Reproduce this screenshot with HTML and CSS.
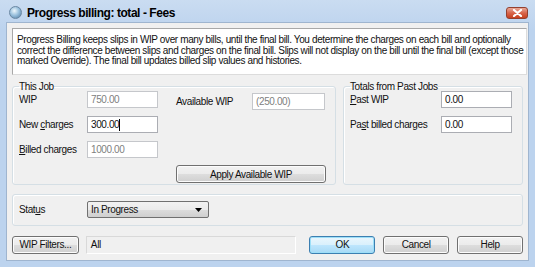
FILE: index.html
```html
<!DOCTYPE html>
<html>
<head>
<meta charset="utf-8">
<link rel="stylesheet" href="styles.css">
</head>
<body>
<div class="window">
  <div class="titlebar">
    <span class="appicon"></span>
    <span class="title">Progress billing: total - Fees</span>
    <span class="close"><svg width="11" height="8" viewBox="0 0 11 8"><path d="M2 1 L9 7 M9 1 L2 7" stroke="#fff" stroke-width="2.2" stroke-linecap="round"/></svg></span>
  </div>
  <div class="client">
    <div class="desc">Progress Billing keeps slips in WIP over many bills, until the final bill. You determine the charges on each bill and optionally correct the difference between slips and charges on the final bill. Slips will not display on the bill until the final bill (except those marked Override). The final bill updates billed slip values and histories.</div>
    <div class="groups">
      <fieldset class="group job">
        <legend>This Job</legend>
        <div class="jobgrid">
          <div class="col">
            <div class="row"><span class="lbl">WIP</span><span class="field dis">750.00</span></div>
            <div class="row"><span class="lbl">New <u>c</u>harges</span><span class="field">300.00<i class="caret"></i></span></div>
            <div class="row"><span class="lbl"><u>B</u>illed charges</span><span class="field dis">1000.00</span></div>
          </div>
          <div class="col right">
            <div class="row avail"><span class="lbl2">Available WIP</span><span class="field dis wide">(250.00)</span></div>
            <span class="btn apply">Apply Available WIP</span>
          </div>
        </div>
      </fieldset>
      <fieldset class="group past">
        <legend>Totals from Past Jobs</legend>
        <div class="col">
          <div class="row"><span class="lbl3"><u>P</u>ast WIP</span><span class="field">0.00</span></div>
          <div class="row"><span class="lbl3">Pa<u>s</u>t billed charges</span><span class="field">0.00</span></div>
        </div>
      </fieldset>
    </div>
    <fieldset class="group status">
      <div class="row"><span class="lbl">Stat<u>u</u>s</span><span class="combo">In Progress<svg width="7" height="4" viewBox="0 0 7 4"><path d="M0 0 H7 L3.5 4 Z" fill="#000"/></svg></span></div>
    </fieldset>
    <div class="bottom">
      <span class="btn filters">WIP Filters...</span>
      <span class="allfield">All</span>
      <span class="btn ok">OK</span>
      <span class="btn">Cancel</span>
      <span class="btn">Help</span>
    </div>
  </div>
</div>
</body>
</html>
```
FILE: styles.css
```css
* { box-sizing: border-box; }
html, body { margin: 0; padding: 0; }
body {
  width: 535px; height: 267px; overflow: hidden;
  font-family: "Liberation Sans", Arial, sans-serif;
  font-size: 10px; letter-spacing: -0.38px; color: #111;
}
.window {
  width: 535px; height: 267px;
  background: linear-gradient(#cadcf1 0, #bcd3ee 30px, #bcd3ee 100%);
  padding: 0 6px 6px 6px;
  display: flex; flex-direction: column;
}
.titlebar {
  height: 22px; padding-top: 3px; display: flex; align-items: center; position: relative;
}
.appicon {
  width: 13px; height: 13px; border-radius: 50%; margin: 0 5px 0 3px;
  background: radial-gradient(circle at 40% 35%, #eef7fc 0, #9cc2de 45%, #4a78a0 100%);
  border: 1px solid #6a87a2;
}
.title { font-weight: bold; font-size: 12px; letter-spacing: -0.45px; color: #000; }
.close {
  margin-left: auto; margin-right: 1px; margin-top: 0;
  width: 22px; height: 12px; border-radius: 3px;
  background: linear-gradient(#e8a898, #d8654b 50%, #c8401f);
  border: 1px solid #93402f;
  display: flex; align-items: center; justify-content: center;
}
.client {
  flex: 1; background: #f0f0f0; border: 1px solid #9fb5cf;
  padding: 5px 5px 0 5px;
  display: flex; flex-direction: column;
}
.desc {
  background: #fff; border: 1px solid #a8a8a8; border-right-color: #dcdcdc; border-bottom-color: #dcdcdc;
  padding: 6px 2px 0 4px; line-height: 10.5px; height: 47px; margin-right: -4px;
}
.groups { display: flex; gap: 7px; margin-top: 6px; height: 104px; }
.group {
  margin: 0; border: 1px solid #d5dfe5; border-radius: 3px;
  box-shadow: inset 1px 1px 0 #fff;
  padding: 0 6px;
}
.group legend { padding: 0; margin-left: 0; line-height: 11px; }
.job { width: 324px; }
.past { flex: 1; }
.jobgrid { display: flex; }
.col { display: flex; flex-direction: column; gap: 8px; margin-top: -1px; }
.row { display: flex; align-items: center; height: 17px; }
.lbl { width: 68px; }
.lbl2 { width: 76px; }
.lbl3 { width: 91px; }
.field {
  width: 71px; height: 17px; background: #fff; border: 1px solid #abadb3;
  padding: 1px 3px; line-height: 13px; display: flex; align-items: center;
}
.field.dis { color: #808080; border-color: #c5c7cb; }
.field.wide { width: 73px; }
.caret { display: inline-block; width: 1px; height: 12px; background: #000; margin-left: 0; }
.right { margin-left: 18px; padding-top: 2px; }
.avail { margin-bottom: 51px; }
.btn {
  display: inline-flex; align-items: center; justify-content: center;
  height: 18px; width: 66px; border: 1px solid #707070; border-radius: 3px;
  background: linear-gradient(#f2f2f2 0, #ebebeb 50%, #dddddd 51%, #cfcfcf 100%);
  box-shadow: inset 0 0 0 1px #fcfcfc;
}
.apply { width: 150px; height: 18px; margin-top: -4px; }
.status { margin-top: 9px; height: 32px; padding-top: 6px; }
.combo {
  width: 122px; height: 17px; border: 1px solid #707070; border-radius: 2px;
  background: linear-gradient(#f2f2f2 0, #ebebeb 50%, #dddddd 51%, #cfcfcf 100%);
  display: flex; align-items: center; justify-content: space-between; padding: 0 6px 0 3px;
}
.bottom { display: flex; align-items: center; margin-top: 9px; height: 19px; }
.filters { width: 67px; }
.allfield {
  width: 211px; height: 18px; margin-left: 7px; border: 1px solid #d9d9d9; border-right-color: #fff; border-bottom-color: #fff;
  background: #f0f0f0; display: flex; align-items: center; padding-left: 4px;
}
.ok {
  margin-left: 13px; border-color: #3c7fb1;
  background: linear-gradient(#eaf6fd 0, #d9f0fc 50%, #bee6fd 51%, #a7d9f5 100%);
  box-shadow: inset 0 0 0 1px #9ddff8;
}
.bottom .btn + .btn { margin-left: 8px; }
```
